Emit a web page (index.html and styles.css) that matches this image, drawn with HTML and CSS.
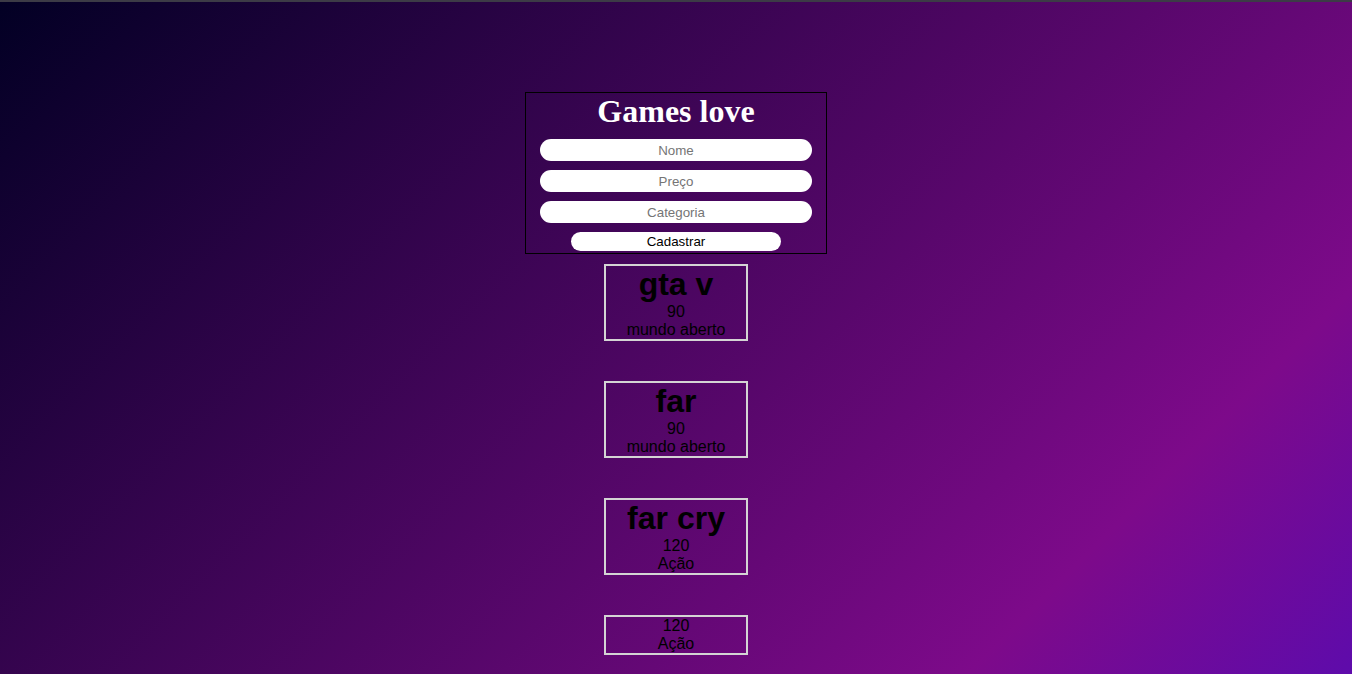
FILE: index.html
```html
<!DOCTYPE html>
<html lang="pt-BR">
<head>
<meta charset="utf-8">
<title>Games love</title>
<link rel="stylesheet" href="styles.css">
</head>
<body>
<main class="page">
  <form class="cadastro">
    <h1 class="titulo">Games love</h1>
    <input class="campo" type="text" placeholder="Nome">
    <input class="campo" type="text" placeholder="Preço">
    <input class="campo" type="text" placeholder="Categoria">
    <button class="botao" type="button">Cadastrar</button>
  </form>
  <section class="lista">
    <div class="card"><h2 class="card-nome">gta v</h2><p class="card-linha">90</p><p class="card-linha">mundo aberto</p></div>
    <div class="card"><h2 class="card-nome">far</h2><p class="card-linha">90</p><p class="card-linha">mundo aberto</p></div>
    <div class="card"><h2 class="card-nome">far cry</h2><p class="card-linha">120</p><p class="card-linha">Ação</p></div>
    <div class="card"><h2 class="card-nome"></h2><p class="card-linha">120</p><p class="card-linha">Ação</p></div>
  </section>
</main>
</body>
</html>
```
FILE: styles.css
```css
html {
  height: 100%;
}
body {
  margin: 0;
  min-height: 100%;
  box-sizing: border-box;
  border-top: 2px solid #3c3b46;
  background: linear-gradient(135deg, #020024 0%, #7d0a8a 81%, #5e0bab 100%);
  background-attachment: fixed;
  font-family: "Liberation Sans", Arial, sans-serif;
}
.page {
  display: flex;
  flex-direction: column;
  align-items: center;
  padding-top: 90px;
}
.cadastro {
  width: 300px;
  border: 1px solid #000;
  display: flex;
  flex-direction: column;
  align-items: center;
  gap: 9px;
  padding: 0 0 2px;
  margin: 0;
}
.titulo {
  margin: 0;
  font-family: "Liberation Serif", "Times New Roman", serif;
  font-weight: bold;
  font-size: 32px;
  line-height: 37px;
  color: #fff;
}
.campo {
  width: 272px;
  height: 22px;
  box-sizing: border-box;
  border: none;
  border-radius: 11px;
  background: #fff;
  text-align: center;
  font-family: "Liberation Sans", Arial, sans-serif;
  font-size: 13.333px;
  padding: 0;
}
.campo::placeholder {
  color: #757575;
}
.botao {
  width: 210px;
  height: 19px;
  border: none;
  border-radius: 10px;
  background: #fff;
  color: #000;
  font-family: "Liberation Sans", Arial, sans-serif;
  font-size: 13.333px;
  padding: 0;
}
.lista {
  display: flex;
  flex-direction: column;
  align-items: center;
  gap: 40px;
  margin-top: 10px;
}
.card {
  width: 140px;
  border: 2px solid #d4d4d4;
  text-align: center;
  color: #000;
}
.card-nome {
  margin: 0;
  font-size: 32px;
  font-weight: bold;
  line-height: 37px;
}
.card-nome:empty {
  display: none;
}
.card-linha {
  margin: 0;
  font-size: 16px;
  line-height: 18px;
}
```
